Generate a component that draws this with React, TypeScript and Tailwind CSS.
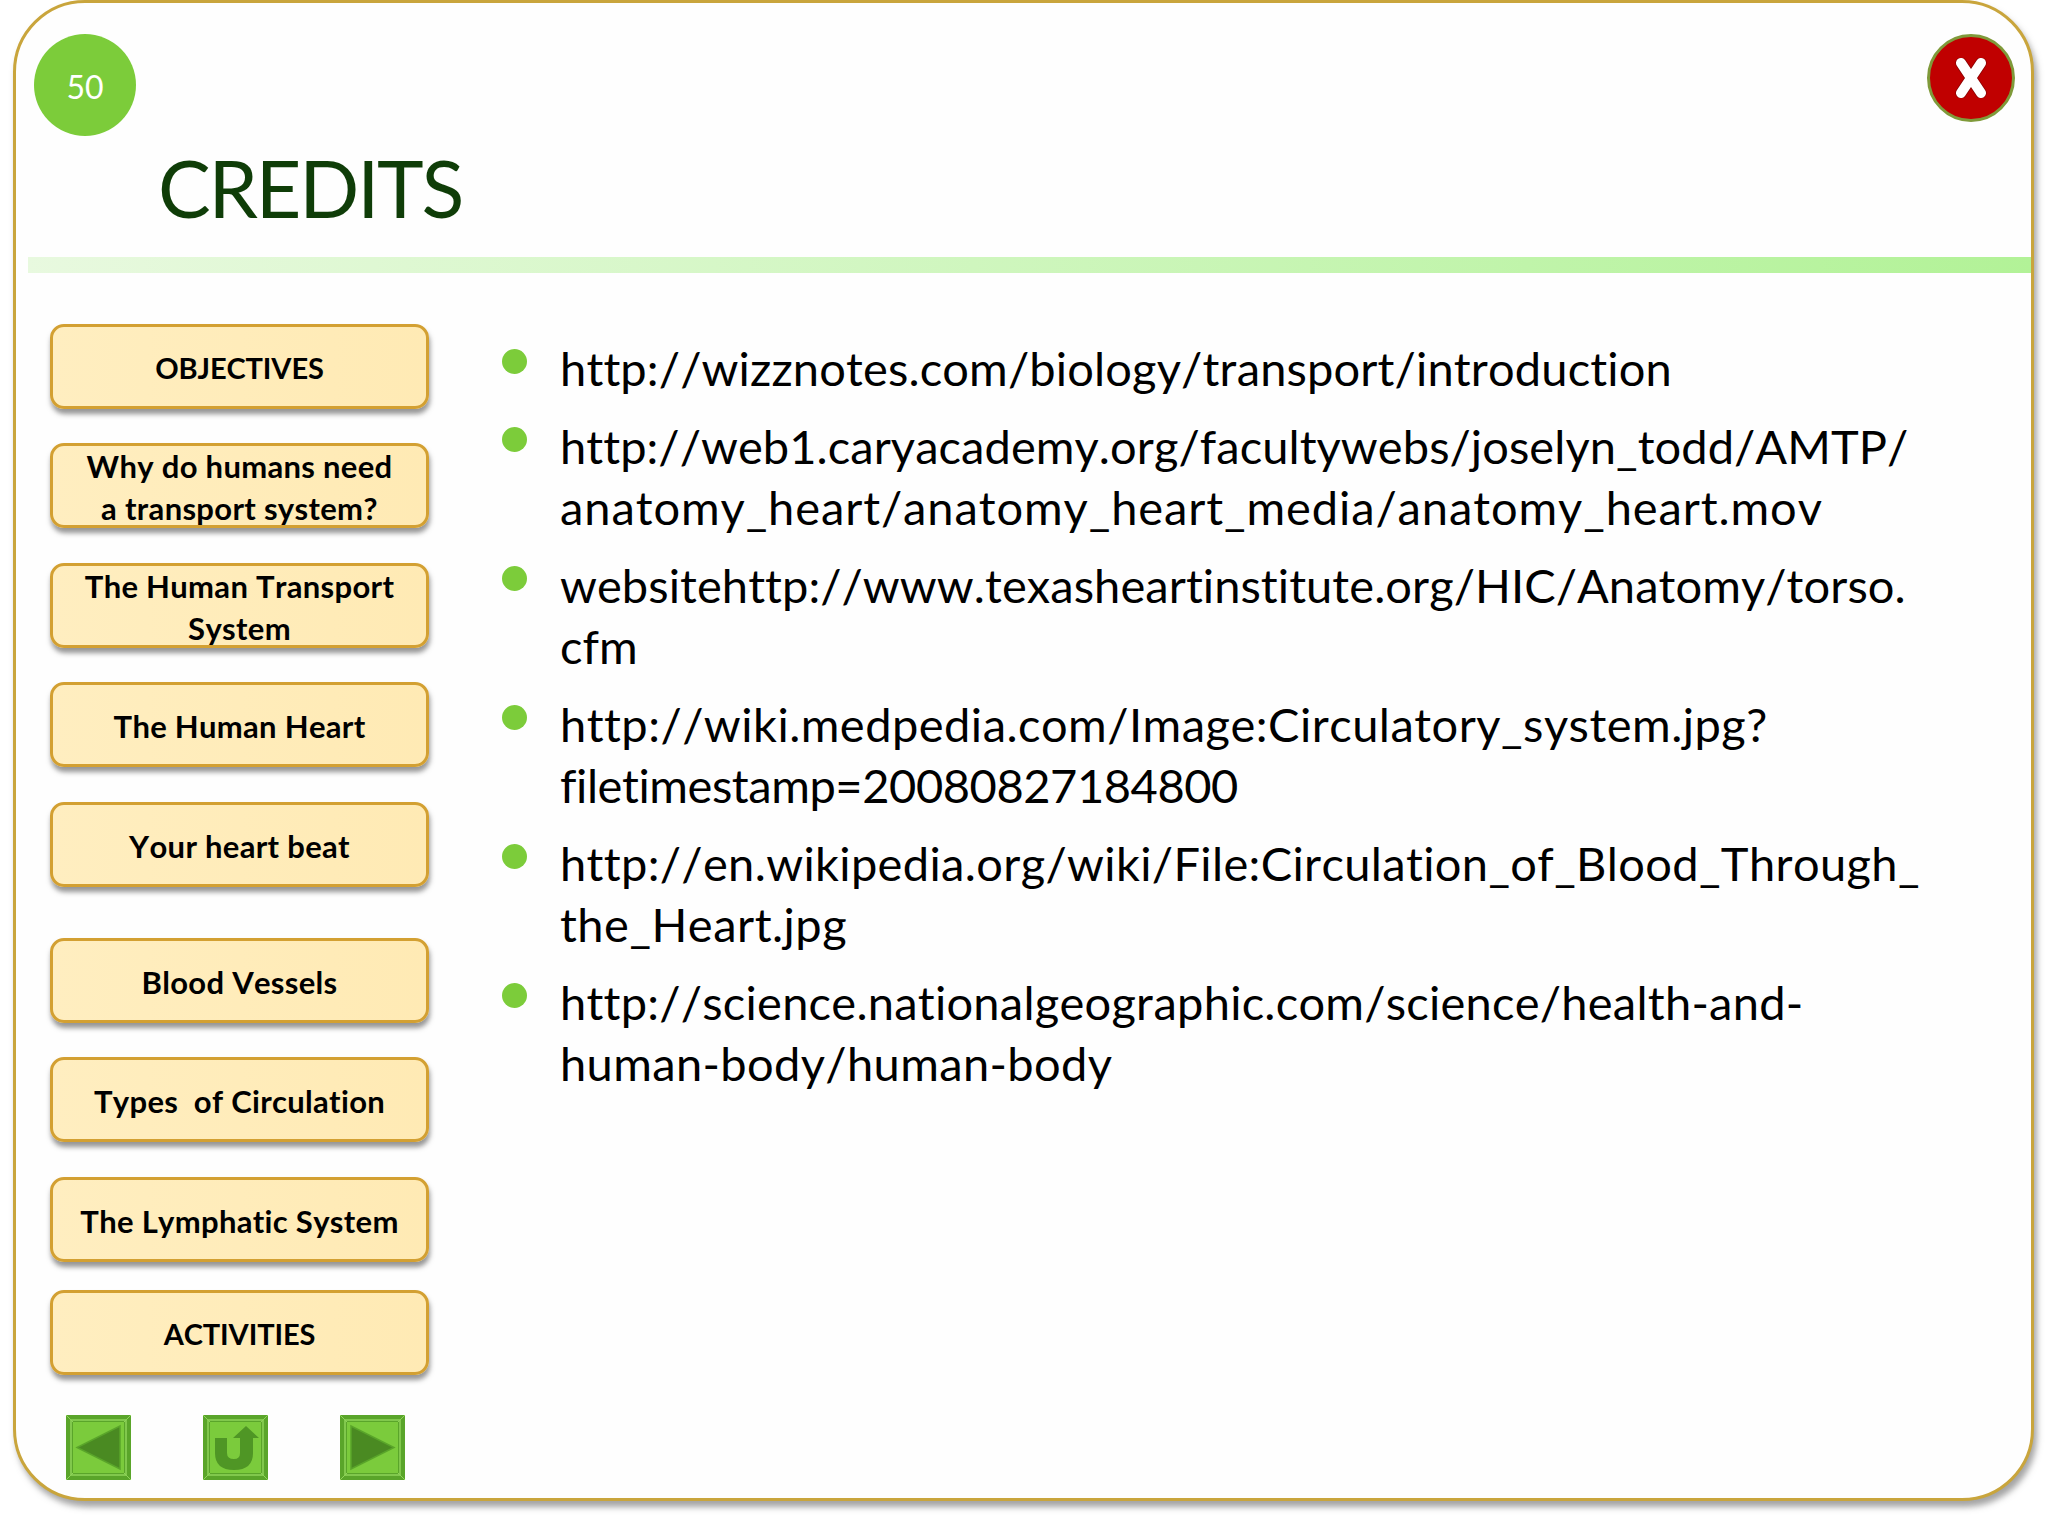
const navItems = [
  { lines: ["OBJECTIVES"], mt: "", caps: true },
  { lines: ["Why do humans need", "a transport system?"], mt: "mt-[34px]", caps: false },
  { lines: ["The Human Transport", "System"], mt: "mt-[35px]", caps: false },
  { lines: ["The Human Heart"], mt: "mt-[34px]", caps: false },
  { lines: ["Your heart beat"], mt: "mt-[35px]", caps: false },
  { lines: ["Blood Vessels"], mt: "mt-[51px]", caps: false },
  { lines: ["Types  of Circulation"], mt: "mt-[34px]", caps: false },
  { lines: ["The Lymphatic System"], mt: "mt-[35px]", caps: false },
  { lines: ["ACTIVITIES"], mt: "mt-[28px]", caps: true },
];

// tracking per line, Lato's underscore and digits differ from the original font
const links = [
  [{ text: "http://wizznotes.com/biology/transport/introduction", cls: "tracking-[0.15px]" }],
  [
    { text: "http://web1.caryacademy.org/facultywebs/joselyn_todd/AMTP/", cls: "tracking-[0.07px]" },
    { text: "anatomy_heart/anatomy_heart_media/anatomy_heart.mov", cls: "tracking-[0.9px]" },
  ],
  [
    { text: "websitehttp://www.texasheartinstitute.org/HIC/Anatomy/torso.", cls: "tracking-[0.07px]" },
    { text: "cfm", cls: "" },
  ],
  [
    { text: "http://wiki.medpedia.com/Image:Circulatory_system.jpg?", cls: "tracking-[0.48px]" },
    { text: "filetimestamp=20080827184800", cls: "tracking-[-0.42px]" },
  ],
  [
    { text: "http://en.wikipedia.org/wiki/File:Circulation_of_Blood_Through_", cls: "tracking-[0.35px]" },
    { text: "the_Heart.jpg", cls: "tracking-[0.5px]" },
  ],
  [
    { text: "http://science.nationalgeographic.com/science/health-and-", cls: "tracking-[0.25px]" },
    { text: "human-body/human-body", cls: "tracking-[0.37px]" },
  ],
];

const NavSquare = ({ children }: { children: React.ReactNode }) => (
  <svg width="65" height="65" viewBox="0 0 65 65">
    <rect x="0" y="0" width="65" height="65" fill="#5aa52a" />
    <path d="M0 0 L7 7 M65 0 L58 7 M0 65 L7 58 M65 65 L58 58" stroke="#8fd35a" strokeWidth="1" />
    <rect x="5" y="5" width="55" height="55" fill="none" stroke="#8fd35a" strokeWidth="1.5" />
    <rect x="7" y="7" width="51" height="51" fill="#7bcb3c" />
    {children}
  </svg>
);

export default function App() {
  return (
    <div className="w-[2048px] h-[1536px] bg-white overflow-hidden font-['Lato','Liberation_Sans',sans-serif] [font-variant-ligatures:none] [font-kerning:none]">
      <div className="ml-[13px] w-[2021px] h-[1501px] rounded-[72px] border-[3px] border-[#c9a53c] bg-[#fefefe] shadow-[3px_6px_6px_rgba(90,90,90,0.55)] flex flex-col">
        {/* header */}
        <div className="h-[254px] pt-[31px] pl-[18px] pr-[16px] flex justify-between items-start">
          <div className="flex items-start">
            <div className="w-[102px] h-[102px] pt-[4px] rounded-full bg-[#7ccc3a] text-white text-[32px] flex items-center justify-center">
              50
            </div>
            <h1 className="ml-[22px] mt-[106px] text-[#0f3d08] text-[79px] leading-[96px] tracking-[-2.2px]">CREDITS</h1>
          </div>
          <div className="w-[88px] h-[88px] rounded-full bg-[#c00000] border-[3px] border-[#7f9a3a] flex items-center justify-center">
            <svg width="32" height="40" viewBox="0 0 32 40">
              <path d="M6 5 L26 35 M26 5 L6 35" stroke="#8a0000" strokeWidth="11.5" strokeLinecap="round" fill="none" />
              <path d="M6 5 L26 35 M26 5 L6 35" stroke="#fff" strokeWidth="10" strokeLinecap="round" fill="none" />
            </svg>
          </div>
        </div>
        <div className="ml-[12px] h-[16px] bg-gradient-to-r from-[#e8f9df] to-[#b2f297]" />

        <div className="flex mt-[51px]">
          {/* sidebar */}
          <div className="ml-[34px] w-[379px] shrink-0">
            {navItems.map((item) => (
              <div
                key={item.lines[0]}
                className={`${item.mt} h-[85px] pt-[2px] rounded-[14px] border-[3px] border-[#d3a032] bg-gradient-to-r from-[#ffeec0] to-[#ffeab4] shadow-[1px_5px_5px_rgba(80,80,80,0.6)] flex flex-col items-center justify-center text-black font-bold leading-[42px] whitespace-pre ${item.caps ? "text-[29px] tracking-[-0.1px]" : "text-[31px] tracking-[0.3px]"}`}
              >
                {item.lines.map((l) => (
                  <span key={l}>{l}</span>
                ))}
              </div>
            ))}
            <div className="mt-[40px] ml-[16px] flex gap-[72px]">
              <NavSquare>
                <path d="M54 11 L54 54 L11 32.5 Z" fill="#4a8a22" stroke="#5aa52a" strokeWidth="1.5" />
              </NavSquare>
              <NavSquare>
                <path d="M12 23 L24 23 L24 38 Q24 44 31 44 Q37 44 37 38 L37 23 L30 23 L43 11 L56 23 L50 23 L50 38 Q50 55 31 55 Q12 55 12 38 Z" fill="#4f9625" />
              </NavSquare>
              <NavSquare>
                <path d="M11 11 L11 54 L54 32.5 Z" fill="#4a8a22" stroke="#5aa52a" strokeWidth="1.5" />
              </NavSquare>
            </div>
          </div>

          {/* links */}
          <ul className="ml-[73px] mt-[14px] text-black text-[47px] leading-[61px]">
            {links.map((lines) => (
              <li key={lines[0].text} className="flex mb-[17px]">
                <span className="w-[25px] h-[25px] mt-[11px] rounded-full bg-[#7ccc3a] shrink-0" />
                <div className="ml-[33px] whitespace-nowrap">
                  {lines.map((l) => (
                    <div key={l.text} className={l.cls}>
                      {l.text}
                    </div>
                  ))}
                </div>
              </li>
            ))}
          </ul>
        </div>
      </div>
    </div>
  );
}
